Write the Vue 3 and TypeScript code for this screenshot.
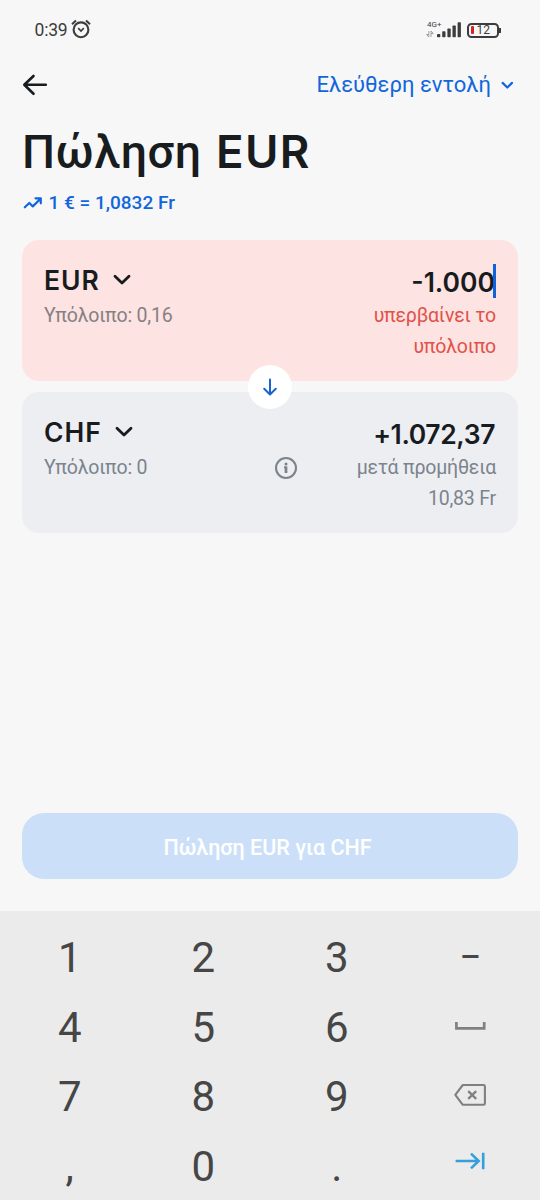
<script setup lang="ts">
interface Key {
  id: string
  label?: string
  icon?: 'space' | 'backspace' | 'next'
}

const keys: Key[] = [
  { id: 'k1', label: '1' },
  { id: 'k2', label: '2' },
  { id: 'k3', label: '3' },
  { id: 'minus', label: '–' },
  { id: 'k4', label: '4' },
  { id: 'k5', label: '5' },
  { id: 'k6', label: '6' },
  { id: 'space', icon: 'space' },
  { id: 'k7', label: '7' },
  { id: 'k8', label: '8' },
  { id: 'k9', label: '9' },
  { id: 'backspace', icon: 'backspace' },
  { id: 'comma', label: ',' },
  { id: 'k0', label: '0' },
  { id: 'dot', label: '.' },
  { id: 'next', icon: 'next' },
]
</script>

<template>
  <div class="screen">
    <header class="status">
      <span class="clock">0:39</span>
      <svg class="alarm" width="20" height="20" viewBox="0 0 20 20" fill="none" stroke="#3c3c3c">
        <circle cx="10" cy="10.8" r="7.4" stroke-width="2.1" />
        <path d="M7.2 9.2 10 12l2.8-2.8" stroke-width="1.7" />
        <path d="M1 5.2 5 1.5M19 5.2 15 1.5" stroke-width="2" />
      </svg>
      <div class="network">
        <span class="gen">4G+</span>
        <svg width="8" height="6" viewBox="0 0 8 6" fill="none" stroke="#9a9a9a" stroke-width="0.9">
          <path d="M2.8 0v6L.5 3.5M.5 3.5h2.3M5 6V0l2.3 2.5H5" />
        </svg>
      </div>
      <svg class="signal" width="25" height="16" viewBox="0 0 25 16" fill="#3c3c3c">
        <rect x="0" y="12" width="3.3" height="3.3" rx="0.8" />
        <rect x="5.2" y="9.3" width="3.3" height="6" rx="0.8" />
        <rect x="10.4" y="6.5" width="3.3" height="8.8" rx="0.8" />
        <rect x="15.5" y="3.5" width="3.3" height="11.8" rx="0.8" />
        <rect x="20.6" y="0.3" width="3.3" height="15" rx="0.8" />
      </svg>
      <div class="battery"><i class="charge"></i><span>12</span></div>
      <i class="battery-tip"></i>
    </header>

    <nav class="nav">
      <svg width="26" height="24" viewBox="0 0 26 24" fill="none" stroke="#191c1f" stroke-width="2.6" stroke-linecap="round" stroke-linejoin="round">
        <path d="M23.8 11.8H2.5M11.5 3 2.3 11.8l9.2 9" />
      </svg>
      <div class="order">
        <span>Ελεύθερη εντολή</span>
        <svg width="14" height="10" viewBox="0 0 14 10" fill="none" stroke="#1266dc" stroke-width="2.2" stroke-linecap="round" stroke-linejoin="round">
          <path d="M2.6 2.9 7.3 7.5l4.7-4.6" />
        </svg>
      </div>
    </nav>

    <h1 class="title"><span class="greek">Πώληση</span><span class="code">EUR</span></h1>

    <div class="rate">
      <svg width="20" height="14" viewBox="0 0 20 14" fill="none" stroke="#1266dc" stroke-width="2.2" stroke-linecap="round" stroke-linejoin="round">
        <path d="M1.8 11.3 6.3 7l3.5 3.4 7.5-7.4M12.5 2.3h5.3v5" />
      </svg>
      <span>1 € = 1,0832 Fr</span>
    </div>

    <main class="cards">
      <section class="card card-error">
        <div class="left">
          <div class="currency">
            <span>EUR</span>
            <svg width="20" height="12" viewBox="0 0 20 12" fill="none" stroke="#191c1f" stroke-width="2.8" stroke-linecap="round" stroke-linejoin="round">
              <path d="m3 2.3 7 6.8 7-6.8" />
            </svg>
          </div>
          <div class="sub">Υπόλοιπο: 0,16</div>
        </div>
        <div class="right">
          <div class="amount"><span>-1.000</span><i class="caret"></i></div>
          <div class="sub warn">υπερβαίνει το</div>
          <div class="sub warn">υπόλοιπο</div>
        </div>
      </section>
      <div class="swap">
        <svg width="18" height="20" viewBox="0 0 18 20" fill="none" stroke="#1763d3" stroke-width="2" stroke-linecap="round" stroke-linejoin="round">
          <path d="M9 2.500v15M3.200 11.700l5.800 5.800 5.800-5.800" />
        </svg>
      </div>
      <section class="card">
        <div class="left">
          <div class="currency">
            <span>CHF</span>
            <svg width="20" height="12" viewBox="0 0 20 12" fill="none" stroke="#191c1f" stroke-width="2.8" stroke-linecap="round" stroke-linejoin="round">
              <path d="m3 2.3 7 6.8 7-6.8" />
            </svg>
          </div>
          <div class="sub">Υπόλοιπο: 0</div>
        </div>
        <svg class="info" width="24" height="24" viewBox="0 0 24 24" fill="none" stroke="#7b848d">
          <circle cx="12" cy="12" r="10" stroke-width="2.1" />
          <path d="M12 10.4V17" stroke-width="2.7" />
          <path d="M10 11.3H12" stroke-width="1.8" />
          <circle cx="12" cy="8" r="1.5" fill="#7b848d" stroke="none" />
        </svg>
        <div class="right">
          <div class="amount buy"><span>+1.072,37</span></div>
          <div class="sub">μετά προμήθεια</div>
          <div class="sub">10,83 Fr</div>
        </div>
      </section>
    </main>

    <button class="submit" type="button"><span>Πώληση EUR για CHF</span></button>

    <div class="keypad">
      <div v-for="key in keys" :key="key.id" class="key">
        <span v-if="key.label" :class="{ dash: key.id === 'minus' }">{{ key.label }}</span>
        <svg v-else-if="key.icon === 'space'" class="space" width="32" height="10" viewBox="0 0 32 10" fill="none" stroke="#808080" stroke-width="2.7">
          <path d="M2.4 1v6.4h27.8V1" />
        </svg>
        <svg v-else-if="key.icon === 'backspace'" class="backspace" width="34" height="24" viewBox="0 0 34 24" fill="none" stroke="#808080" stroke-width="2.1" stroke-linejoin="round">
          <path d="M9.8 2h20.7q1.4 0 1.4 1.4v17q0 1.4-1.4 1.4H9.8L2.3 11.9Z" />
          <path d="m15.2 8.2 8 7.6m0-7.6-8 7.6" stroke-width="2.3" />
        </svg>
        <svg v-else class="next" width="32" height="20" viewBox="0 0 32 20" fill="none" stroke="#359fdd" stroke-width="2.6">
          <path d="M1.6 10h23.5M17 2.6l7.7 7.4-7.7 7.4M29.2 1.7v16.6" />
        </svg>
      </div>
    </div>
  </div>
</template>

<style>
body {
  margin: 0;
  background: #f7f7f7;
}
</style>

<style scoped>
.screen {
  box-sizing: border-box;
  width: 540px;
  height: 1200px;
  overflow: hidden;
  display: flex;
  flex-direction: column;
  background: #f7f7f7;
  color: #191c1f;
  font-family: Roboto, "Noto Sans", sans-serif;
}
svg {
  display: block;
  flex: none;
}
.status {
  height: 60px;
  flex: none;
  display: flex;
  align-items: center;
  padding: 0 39px 0 34.5px;
  color: #3c3c3c;
}
.clock {
  font-size: 17.5px;
  line-height: 20px;
  letter-spacing: -0.2px;
}
.alarm {
  margin: -2px auto 0 4px;
}
.network {
  display: flex;
  flex-direction: column;
  gap: 2px;
  width: 15px;
  margin: -3px -5px 0 0;
}
.gen {
  font-size: 8px;
  line-height: 9px;
}
.network svg {
  margin-left: -1px;
}
.signal {
  margin-right: 5px;
}
.battery {
  box-sizing: border-box;
  width: 32px;
  height: 15px;
  border: 2px solid #3c3c3c;
  border-radius: 4.5px;
  display: flex;
  align-items: center;
  padding-left: 1.5px;
  font-size: 12px;
  line-height: 11px;
}
.battery span {
  margin-left: 2.5px;
}
.charge {
  width: 3.5px;
  height: 8px;
  border-radius: 1px;
  background: #d32525;
}
.battery-tip {
  width: 2px;
  height: 5px;
  background: #3c3c3c;
}
.nav {
  height: 50px;
  flex: none;
  display: flex;
  align-items: center;
  justify-content: space-between;
  padding: 0 26px 0 22px;
}
.order {
  display: flex;
  align-items: center;
  gap: 9px;
  color: #1266dc;
  font-size: 22px;
  line-height: 26px;
}
.title {
  margin: 10px 0 0 22px;
  height: 64px;
  flex: none;
  display: flex;
  align-items: baseline;
  gap: 14.5px;
  line-height: 64px;
}
.greek {
  font-size: 46.5px;
  font-weight: 500;
  letter-spacing: 0.6px;
}
.code {
  font-family: Inter, sans-serif;
  font-size: 45.5px;
  font-weight: 600;
  letter-spacing: 1.4px;
}
.rate {
  height: 24px;
  flex: none;
  margin: 7px 0 0 23px;
  display: flex;
  align-items: center;
  gap: 5.5px;
  font-size: 19px;
  font-weight: 500;
  line-height: 24px;
  color: #1266dc;
}
.cards {
  flex: none;
  margin: 25px 22px 0;
  display: flex;
  flex-direction: column;
}
.card {
  box-sizing: border-box;
  height: 140.5px;
  border-radius: 17px;
  background: #edeef2;
  display: flex;
  justify-content: space-between;
  padding: 22px 22px 0;
}
.card-error {
  background: #fde4e2;
}
.currency {
  display: flex;
  align-items: center;
  height: 36px;
  gap: 12px;
  font-family: Inter, sans-serif;
  font-weight: 600;
  font-size: 26.5px;
  letter-spacing: 1px;
}
.sub {
  font-size: 19.5px;
  line-height: 31px;
  letter-spacing: -0.2px;
  color: #7b848d;
}
.left .sub {
  margin-top: 2px;
}
.card-error .left .sub {
  color: #858084;
}
.right {
  display: flex;
  flex-direction: column;
  align-items: flex-end;
}
.right .warn {
  color: #e0524a;
}
.amount {
  display: flex;
  align-items: center;
  height: 38px;
  font-family: Inter, sans-serif;
  font-weight: 600;
  font-size: 26.5px;
}
.amount span {
  padding-top: 2px;
}
.buy {
  letter-spacing: -0.4px;
  padding-right: 1px;
}
.caret {
  width: 3px;
  height: 34px;
  margin-left: -2px;
  background: #0f62dc;
}
.swap {
  position: relative;
  z-index: 1;
  align-self: center;
  width: 44px;
  height: 44px;
  margin: -16px 0 -16.5px;
  border-radius: 50%;
  background: #fff;
  display: flex;
  align-items: center;
  justify-content: center;
}
.info {
  margin: 42px 0 0 auto;
}
.info + .right {
  margin-left: 58.5px;
}
.submit {
  flex: none;
  height: 66px;
  margin: 280.5px 22px 0;
  padding: 3px 5px 0 0;
  border: 0;
  border-radius: 22px;
  background: #ccdff9;
  color: #fff;
  font-family: Roboto, "Noto Sans", sans-serif;
  font-size: 21.5px;
  font-weight: 500;
}
.keypad {
  box-sizing: border-box;
  flex: none;
  height: 290px;
  margin-top: 31.5px;
  padding: 12.5px 3px 0;
  background: #ebebeb;
  display: grid;
  grid-template-columns: repeat(4, 1fr);
  grid-auto-rows: 69.7px;
}
.key {
  display: flex;
  align-items: center;
  justify-content: center;
  font-size: 42px;
  line-height: 50px;
  color: #464646;
}
.dash {
  font-size: 32px;
  font-weight: 500;
  margin-top: -2px;
}
.space {
  margin-top: -3px;
}
.backspace {
  margin-top: -5px;
}
.next {
  margin-top: -12px;
}
</style>
